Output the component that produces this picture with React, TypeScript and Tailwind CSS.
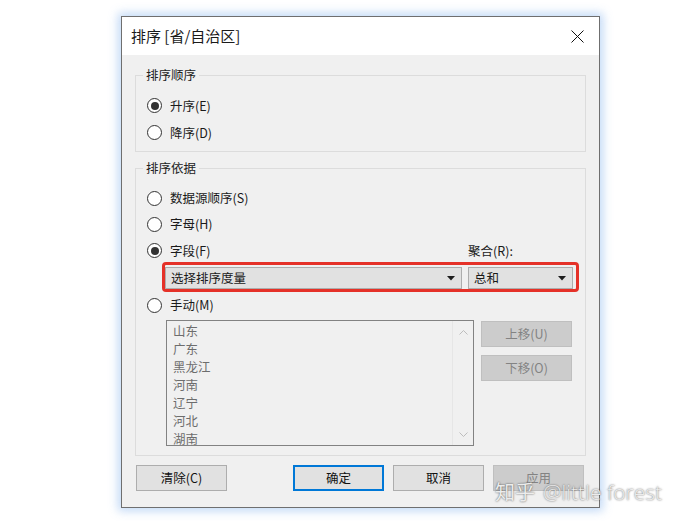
import React from 'react'

const provinces = ['山东', '广东', '黑龙江', '河南', '辽宁', '河北', '湖南']

function Radio({ checked, label }: { checked?: boolean; label: string }) {
  return (
    <div className="flex items-center gap-[8px]">
      <span className="w-[15px] h-[15px] rounded-full border border-[#333333] bg-white flex items-center justify-center">
        {checked && <span className="w-[8px] h-[8px] rounded-full bg-[#333333]" />}
      </span>
      <span>{label}</span>
    </div>
  )
}

function Select({ value, width }: { value: string; width: string }) {
  return (
    <div className={`h-[22px] bg-[#e1e1e1] border border-[#adadad] flex items-center justify-between pl-[5px] pr-[6px] ${width}`}>
      <span>{value}</span>
      <svg width="8" height="5" viewBox="0 0 8 5">
        <path d="M0 0H8L4 4.5Z" fill="#1e1e1e" />
      </svg>
    </div>
  )
}

function Button({ label, disabled, primary }: { label: string; disabled?: boolean; primary?: boolean }) {
  const tone = disabled
    ? 'bg-[#cccccc] border border-[#bfbfbf] text-[#838383]'
    : primary
      ? 'bg-[#e1e1e1] border-2 border-[#0078d7] text-[#111111]'
      : 'bg-[#e1e1e1] border border-[#adadad] text-[#111111]'
  return (
    <div className={`w-[91px] h-[26px] flex items-center justify-center ${tone}`}>{label}</div>
  )
}

export default function App() {
  return (
    <div className="w-[685px] h-[521px] bg-white relative overflow-hidden pt-[16px] pl-[121px] font-['Noto_Sans_CJK_SC',sans-serif] text-[12.5px] leading-[16px] text-[#1a1a1a]">
      <div className="w-[479px] h-[492px] border border-[#6f6f6f] bg-[#f0f0f0] flex flex-col shadow-[0_0_9px_3px_rgba(120,170,235,0.45)]">
        {/* title bar */}
        <div className="h-[38px] bg-white flex items-center justify-between pl-[9px] pr-[15px]">
          <span className="text-[15px] leading-[20px]">排序 [省/自治区]</span>
          <svg width="13" height="13" viewBox="0 0 13 13">
            <path d="M0.5 0.5L12.5 12.5M12.5 0.5L0.5 12.5" stroke="#111" strokeWidth="1" />
          </svg>
        </div>

        <div className="flex flex-col px-[13px]">
          {/* 排序顺序 */}
          <fieldset className="mt-[12px] border border-[#dcdcdc] pt-[9px] pb-[5px] px-[11px] m-0 min-w-0">
            <legend className="-ml-[4px] px-[3px] leading-[16px] text-[#222222]">排序顺序</legend>
            <div className="h-[27px] flex items-center">
              <Radio checked label="升序(E)" />
            </div>
            <div className="h-[27px] flex items-center">
              <Radio label="降序(D)" />
            </div>
          </fieldset>

          {/* 排序依据 */}
          <fieldset className="mt-[8px] border border-[#dcdcdc] pt-[9px] pb-[9px] px-[11px] m-0 min-w-0">
            <legend className="-ml-[4px] px-[3px] leading-[16px] text-[#222222]">排序依据</legend>
            <div className="h-[26px] flex items-center">
              <Radio label="数据源顺序(S)" />
            </div>
            <div className="h-[26px] flex items-center">
              <Radio label="字母(H)" />
            </div>
            <div className="h-[25px] flex items-center pt-[2px]">
              <div className="w-[321px]">
                <Radio checked label="字段(F)" />
              </div>
              <span>聚合(R):</span>
            </div>
            <div className="ml-[15px] w-[417px] h-[30px] border-[3px] border-[#e53128] rounded-[4px] flex items-start gap-[6px] pt-[2px] pr-[3px]">
              <Select value="选择排序度量" width="w-[297px]" />
              <Select value="总和" width="w-[105px]" />
            </div>
            <div className="h-[26px] flex items-center">
              <Radio label="手动(M)" />
            </div>
            <div className="mt-[2px] ml-[19px] flex items-start gap-[7px]">
              <div className="w-[308px] h-[126px] border border-[#828282] flex overflow-hidden">
                <div className="flex-1 pt-[1px] pl-[6px] flex flex-col text-[#6d6d6d]">
                  {provinces.map((p) => (
                    <span key={p} className="leading-[18px] h-[18px] shrink-0">{p}</span>
                  ))}
                </div>
                <div className="w-[21px] border-l border-[#e6e6e6] flex flex-col justify-between items-center pt-[9px] pb-[8px]">
                  <svg width="9" height="5" viewBox="0 0 9 5">
                    <path d="M0.5 4.5L4.5 0.5L8.5 4.5" stroke="#bdbdbd" fill="none" />
                  </svg>
                  <svg width="9" height="5" viewBox="0 0 9 5">
                    <path d="M0.5 0.5L4.5 4.5L8.5 0.5" stroke="#bdbdbd" fill="none" />
                  </svg>
                </div>
              </div>
              <div className="flex flex-col gap-[8px] pt-[1px]">
                <Button label="上移(U)" disabled />
                <Button label="下移(O)" disabled />
              </div>
            </div>
          </fieldset>

          {/* footer buttons */}
          <div className="mt-[9px] flex items-center pl-[1px]">
            <Button label="清除(C)" />
            <div className="ml-[66px] flex gap-[9px]">
              <Button label="确定" primary />
              <Button label="取消" />
              <Button label="应用" disabled />
            </div>
          </div>
        </div>
      </div>

      {/* watermark */}
      <div className="absolute left-[495px] top-[478px] flex items-baseline gap-[8px] text-[#ececec] [text-shadow:0_0_2px_rgba(0,0,0,0.7)]">
        <span className="text-[20px] leading-[28px]">知乎</span>
        <span className="text-[21px] leading-[28px] font-light font-['Open_Sans',sans-serif]">@little forest</span>
      </div>
    </div>
  )
}
